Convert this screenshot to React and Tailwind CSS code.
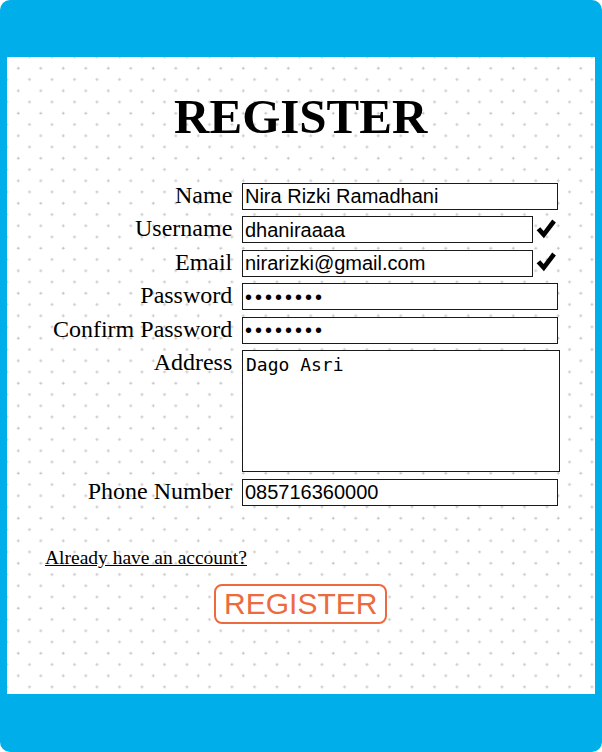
import React from 'react';

// heavy check mark next to validated fields
const Check = () => (
  <svg viewBox="0 0 20 20" className="w-[20px] h-[20px] mt-[2.5px] ml-[3px] shrink-0">
    <path d="M0.6 11.3 L4.3 8.2 L7.6 12.1 L16.2 0.6 L19.9 3.4 L7.9 19.2 Z" fill="#000" />
  </svg>
);

const Label = ({ children }) => (
  <label className="ml-[38px] w-[187.3px] shrink-0 text-right text-[24px] leading-[25px] text-black font-['Liberation_Serif',serif]">
    {children}
  </label>
);

const inputCls =
  "h-[27px] border border-[#1a1a1a] bg-white px-[1.5px] text-[20px] text-black font-['Liberation_Sans',Arial,sans-serif] outline-none";

const App = () => {
  return (
    <div className="w-full h-[752px] bg-[#00aeea] rounded-[10px] pt-[57px] pb-[58.5px] pl-[7px] pr-[7.5px] flex flex-col">
      <div className="relative flex-1 bg-white">
        {/* dotted background */}
        <svg className="absolute inset-0 w-full h-full" aria-hidden="true">
          <defs>
            <pattern id="plus" x="-5.625" y="-5.625" width="22.5" height="22.5" patternUnits="userSpaceOnUse">
              <path
                d="M4.125 5.625h3M5.625 4.125v3M15.375 16.875h3M16.875 15.375v3"
                stroke="#c4c4c4"
                strokeWidth="1"
              />
            </pattern>
          </defs>
          <rect width="100%" height="100%" fill="url(#plus)" />
        </svg>

        <div className="relative flex flex-col">
          <h1 className="mt-[36px] text-center text-[49px] leading-[48px] font-bold text-black font-['Liberation_Serif',serif]">
            REGISTER
          </h1>

          {/* form rows */}
          <div className="mt-[41.7px] flex flex-col gap-[6.5px]">
            <div className="flex items-start gap-[10.2px]">
              <Label>Name</Label>
              <input className={`${inputCls} w-[316px]`} defaultValue="Nira Rizki Ramadhani" />
            </div>
            <div className="flex items-start gap-[10.2px]">
              <Label>Username</Label>
              <div className="flex items-start">
                <input className={`${inputCls} w-[291px]`} defaultValue="dhaniraaaa" />
                <Check />
              </div>
            </div>
            <div className="flex items-start gap-[10.2px]">
              <Label>Email</Label>
              <div className="flex items-start">
                <input className={`${inputCls} w-[291px]`} defaultValue="nirarizki@gmail.com" />
                <Check />
              </div>
            </div>
            <div className="flex items-start gap-[10.2px]">
              <Label>Password</Label>
              <input type="password" className={`${inputCls} w-[316px] tracking-[3px]`} defaultValue="12345678" />
            </div>
            <div className="flex items-start gap-[10.2px]">
              <Label>Confirm Password</Label>
              <input type="password" className={`${inputCls} w-[316px] tracking-[3px]`} defaultValue="12345678" />
            </div>
            <div className="flex items-start gap-[10.2px]">
              <Label>Address</Label>
              <textarea
                className="w-[318px] h-[122px] resize-none border border-[#1a1a1a] bg-white px-[2.5px] py-[4px] text-[18px] leading-[20.4px] text-black font-['DejaVu_Sans_Mono',monospace] outline-none"
                defaultValue="Dago Asri"
              />
            </div>
            <div className="flex items-start gap-[10.2px]">
              <Label>Phone Number</Label>
              <input className={`${inputCls} w-[316px]`} defaultValue="085716360000" />
            </div>
          </div>

          <div className="mt-[41px] pl-[38px] leading-[22px]">
            <a href="#" className="text-[19.5px] text-black underline font-['Liberation_Serif',serif]">
              Already have an account?
            </a>
          </div>

          <button className="mt-[15.6px] self-center border-2 border-[#ed6a3e] rounded-[8px] px-2 py-[1px] text-[30px] leading-[33.5px] text-[#ed6a3e] bg-white font-['Liberation_Sans',Arial,sans-serif]">
            REGISTER
          </button>
        </div>
      </div>
    </div>
  );
};

export default App;
